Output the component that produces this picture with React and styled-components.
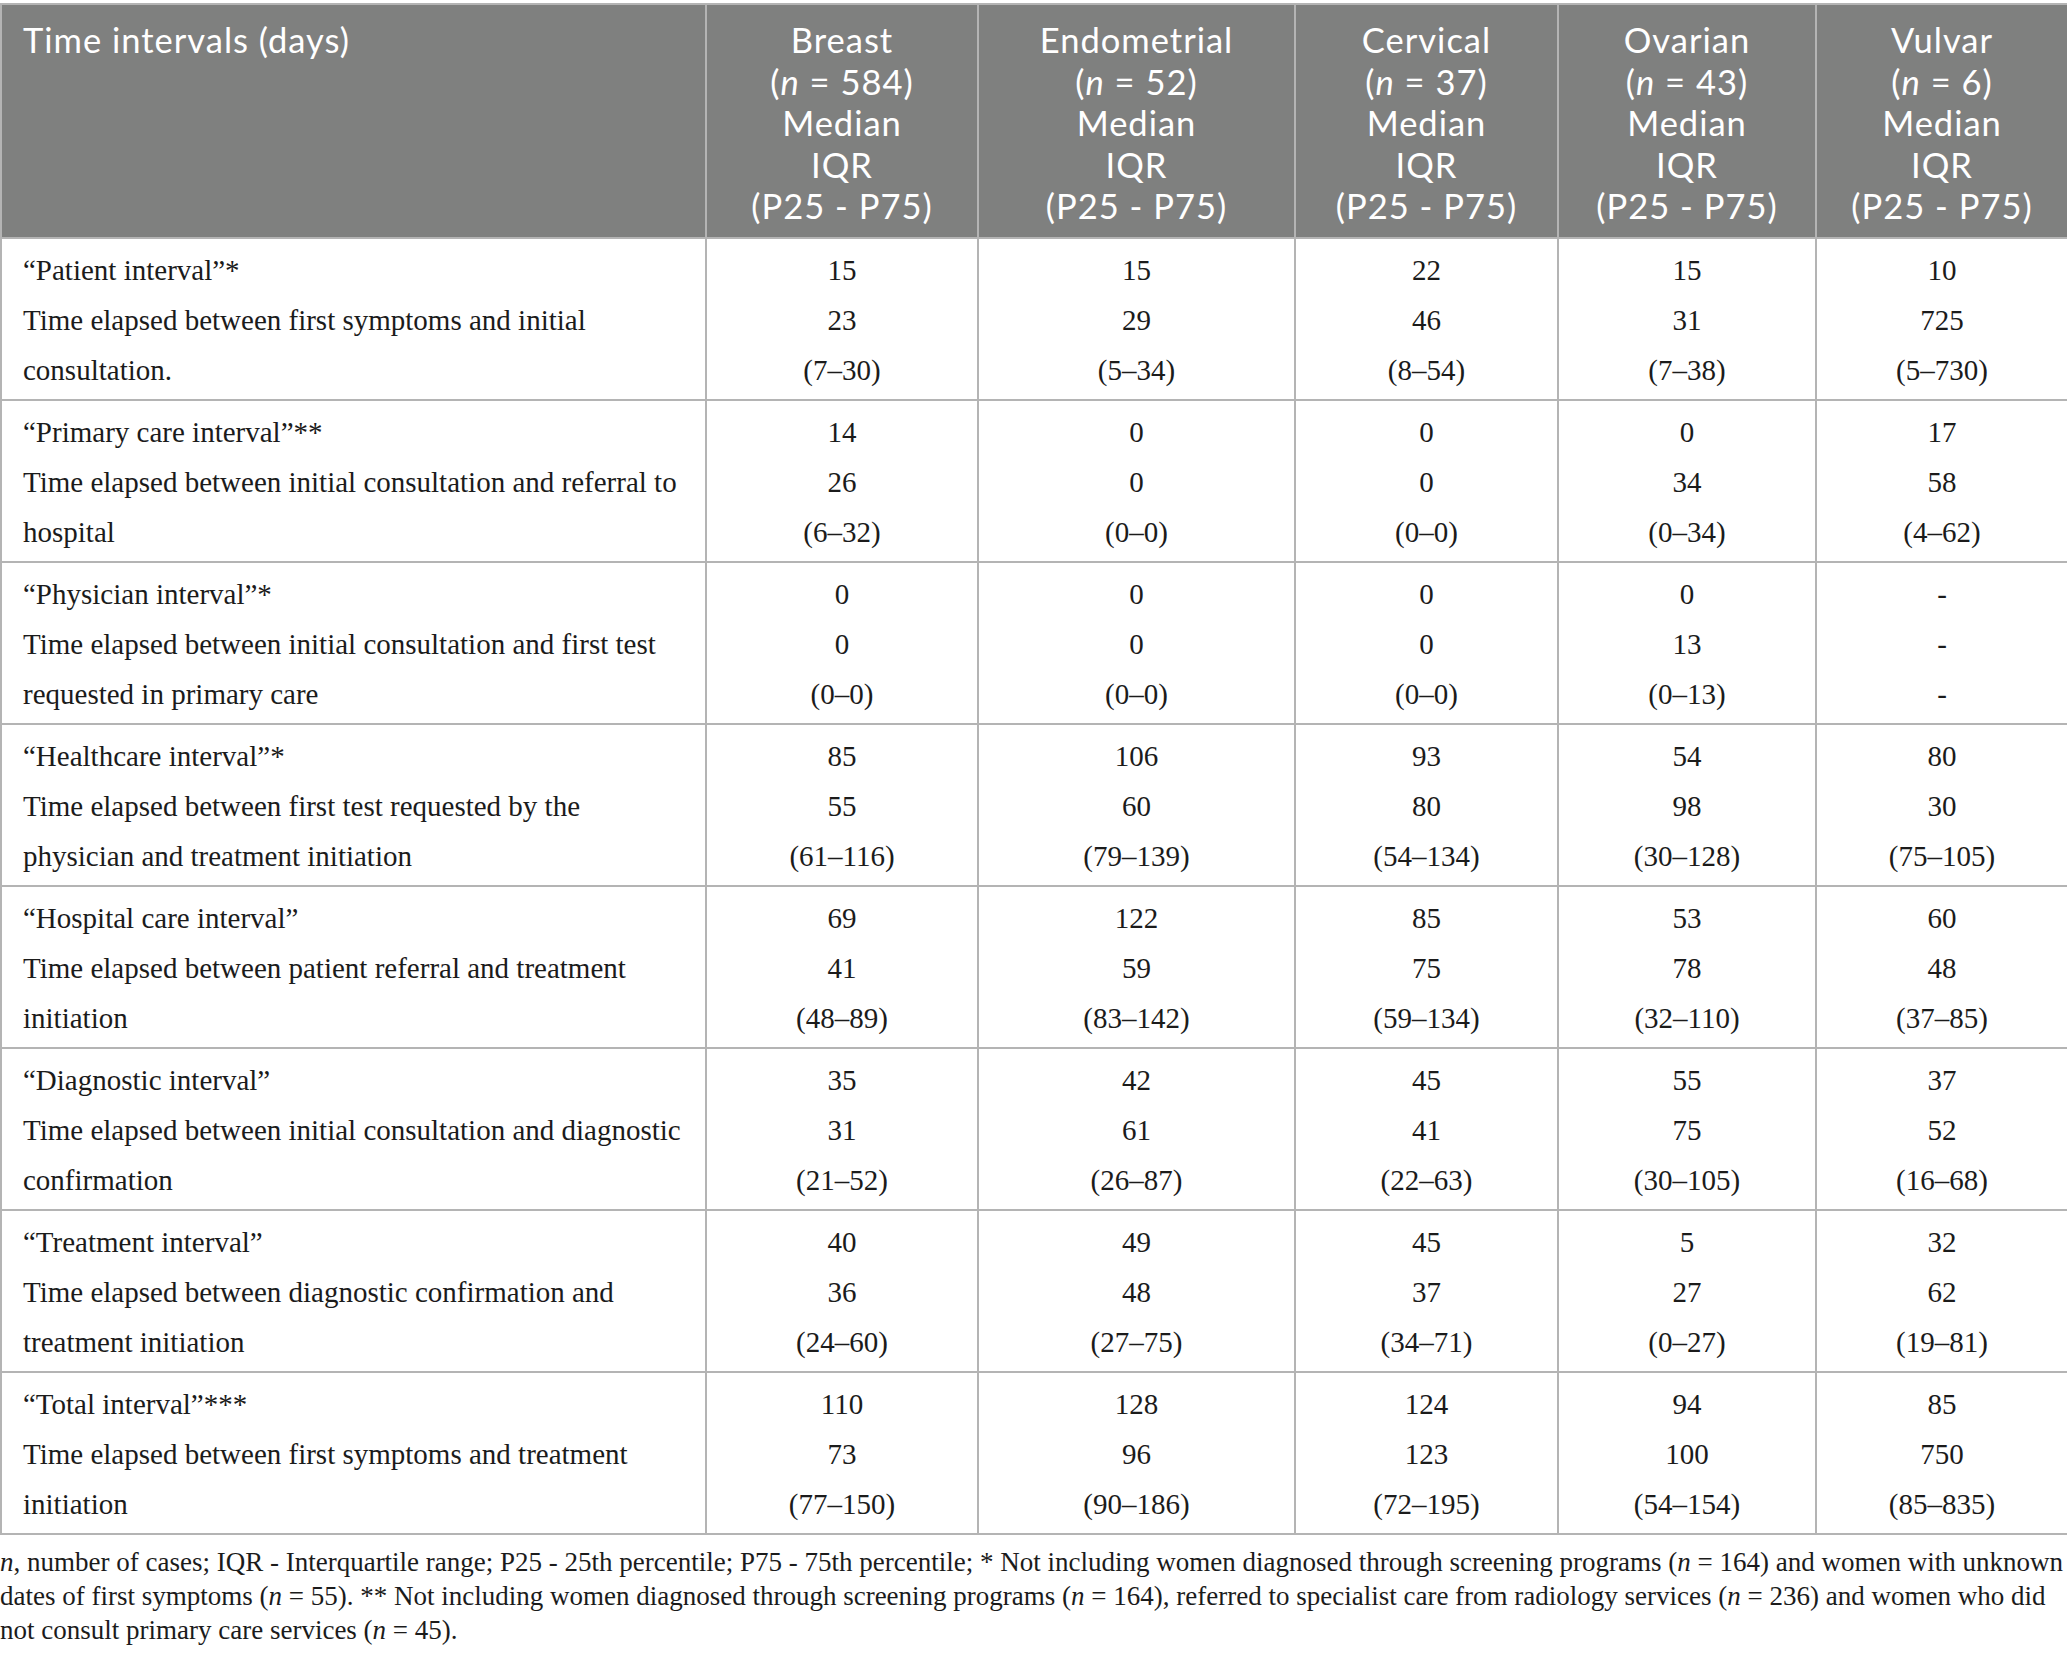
import styled, { createGlobalStyle } from "styled-components";

const GlobalStyle = createGlobalStyle`
  html, body {
    margin: 0;
    padding: 0;
    background: #ffffff;
  }
`;

const Page = styled.div`
  padding-top: 3px;
  width: 2067px;
`;

const Table = styled.table`
  width: 2067px;
  border-collapse: collapse;
  table-layout: fixed;
  border: 2px solid #b4b4b4;
`;

const HeadCell = styled.th`
  background: #7f807f;
  color: #ffffff;
  font-family: Lato, "Open Sans", sans-serif;
  font-weight: 400;
  font-size: 34.5px;
  letter-spacing: 1px;
  line-height: 41.5px;
  vertical-align: top;
  text-align: ${(p) => (p.$left ? "left" : "center")};
  padding: 14px ${(p) => (p.$left ? "10px" : "2px")} 10px
    ${(p) => (p.$left ? "21px" : "2px")};
  border: 2px solid #b4b4b4;
  border-top: none;
  white-space: nowrap;
`;

const Cell = styled.td`
  font-family: "Liberation Serif", "Times New Roman", serif;
  font-size: 29px;
  line-height: 50px;
  color: #1b1b1b;
  vertical-align: top;
  text-align: ${(p) => (p.$left ? "left" : "center")};
  padding: 6px 4px 4px ${(p) => (p.$left ? "21px" : "4px")};
  border: 2px solid #b4b4b4;
  white-space: nowrap;
`;

const Line = styled.div``;

const Note = styled.p`
  margin: 10px 0 0;
  font-family: "Liberation Serif", "Times New Roman", serif;
  font-size: 27px;
  line-height: 34px;
  color: #1b1b1b;
  white-space: nowrap;
`;

const widths = [705, 272, 317, 263, 258, 252];

const columns = [
  ["Breast", "584"],
  ["Endometrial", "52"],
  ["Cervical", "37"],
  ["Ovarian", "43"],
  ["Vulvar", "6"],
];

const rows = [
  {
    name: "“Patient interval”*",
    desc: ["Time elapsed between first symptoms and initial", "consultation."],
    values: [
      ["15", "23", "(7–30)"],
      ["15", "29", "(5–34)"],
      ["22", "46", "(8–54)"],
      ["15", "31", "(7–38)"],
      ["10", "725", "(5–730)"],
    ],
  },
  {
    name: "“Primary care interval”**",
    desc: ["Time elapsed between initial consultation and referral to", "hospital"],
    values: [
      ["14", "26", "(6–32)"],
      ["0", "0", "(0–0)"],
      ["0", "0", "(0–0)"],
      ["0", "34", "(0–34)"],
      ["17", "58", "(4–62)"],
    ],
  },
  {
    name: "“Physician interval”*",
    desc: ["Time elapsed between initial consultation and first test", "requested in primary care"],
    values: [
      ["0", "0", "(0–0)"],
      ["0", "0", "(0–0)"],
      ["0", "0", "(0–0)"],
      ["0", "13", "(0–13)"],
      ["-", "-", "-"],
    ],
  },
  {
    name: "“Healthcare interval”*",
    desc: ["Time elapsed between first test requested by the", "physician and treatment initiation"],
    values: [
      ["85", "55", "(61–116)"],
      ["106", "60", "(79–139)"],
      ["93", "80", "(54–134)"],
      ["54", "98", "(30–128)"],
      ["80", "30", "(75–105)"],
    ],
  },
  {
    name: "“Hospital care interval”",
    desc: ["Time elapsed between patient referral and treatment", "initiation"],
    values: [
      ["69", "41", "(48–89)"],
      ["122", "59", "(83–142)"],
      ["85", "75", "(59–134)"],
      ["53", "78", "(32–110)"],
      ["60", "48", "(37–85)"],
    ],
  },
  {
    name: "“Diagnostic interval”",
    desc: ["Time elapsed between initial consultation and diagnostic", "confirmation"],
    values: [
      ["35", "31", "(21–52)"],
      ["42", "61", "(26–87)"],
      ["45", "41", "(22–63)"],
      ["55", "75", "(30–105)"],
      ["37", "52", "(16–68)"],
    ],
  },
  {
    name: "“Treatment interval”",
    desc: ["Time elapsed between diagnostic confirmation and", "treatment initiation"],
    values: [
      ["40", "36", "(24–60)"],
      ["49", "48", "(27–75)"],
      ["45", "37", "(34–71)"],
      ["5", "27", "(0–27)"],
      ["32", "62", "(19–81)"],
    ],
  },
  {
    name: "“Total interval”***",
    desc: ["Time elapsed between first symptoms and treatment", "initiation"],
    values: [
      ["110", "73", "(77–150)"],
      ["128", "96", "(90–186)"],
      ["124", "123", "(72–195)"],
      ["94", "100", "(54–154)"],
      ["85", "750", "(85–835)"],
    ],
  },
];

export default function App() {
  return (
    <Page>
      <GlobalStyle />
      <Table>
        <colgroup>
          {widths.map((w, i) => (
            <col key={i} style={{ width: w }} />
          ))}
        </colgroup>
        <thead>
          <tr>
            <HeadCell $left>Time intervals (days)</HeadCell>
            {columns.map(([name, n]) => (
              <HeadCell key={name}>
                <Line>{name}</Line>
                <Line>
                  (<i>n</i> = {n})
                </Line>
                <Line>Median</Line>
                <Line>IQR</Line>
                <Line>(P25 - P75)</Line>
              </HeadCell>
            ))}
          </tr>
        </thead>
        <tbody>
          {rows.map((row) => (
            <tr key={row.name}>
              <Cell $left>
                <Line>{row.name}</Line>
                {row.desc.map((d) => (
                  <Line key={d}>{d}</Line>
                ))}
              </Cell>
              {row.values.map((v, i) => (
                <Cell key={i}>
                  {v.map((x, j) => (
                    <Line key={j}>{x}</Line>
                  ))}
                </Cell>
              ))}
            </tr>
          ))}
        </tbody>
      </Table>
      <Note>
        <i>n</i>, number of cases; IQR - Interquartile range; P25 - 25th
        percentile; P75 - 75th percentile; * Not including women diagnosed
        through screening programs (<i>n</i> = 164) and women with unknown
        <br />
        dates of first symptoms (<i>n</i> = 55). ** Not including women
        diagnosed through screening programs (<i>n</i> = 164), referred to
        specialist care from radiology services (<i>n</i> = 236) and women who
        did
        <br />
        not consult primary care services (<i>n</i> = 45).
      </Note>
    </Page>
  );
}
